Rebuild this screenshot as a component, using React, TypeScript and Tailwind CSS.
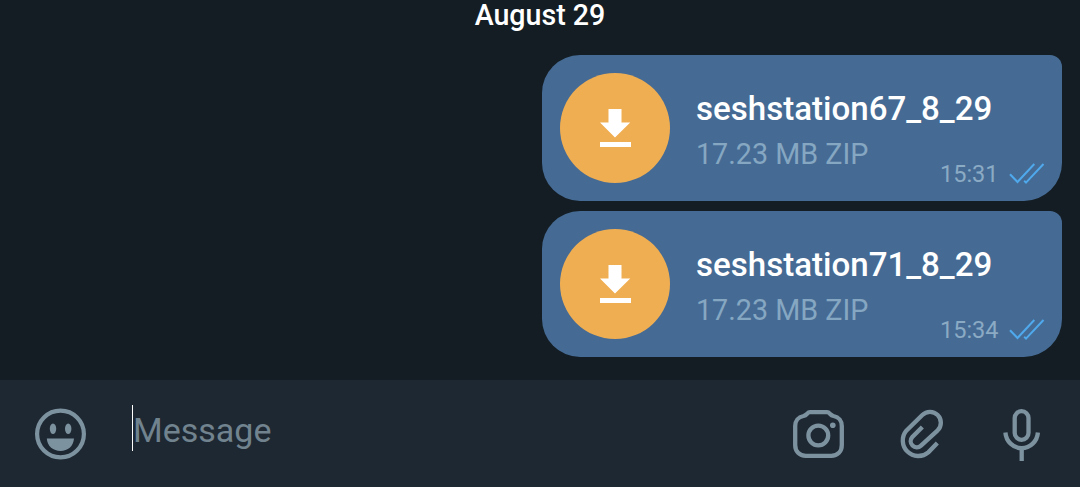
type FileMessage = {
  name: string;
  info: string;
  time: string;
};

const messages: FileMessage[] = [
  { name: "seshstation67_8_29", info: "17.23 MB ZIP", time: "15:31" },
  { name: "seshstation71_8_29", info: "17.23 MB ZIP", time: "15:34" },
];

const DownloadIcon = () => (
  <svg width="32" height="40" viewBox="0 0 32 40" fill="#fff">
    <path d="M9.5 1H22.5V14.5H31.2L16 29.5L1 14.5H9.5Z" />
    <path d="M1 34H32V39H1Z" />
  </svg>
);

const ReadIcon = () => (
  <svg
    width="36"
    height="24"
    viewBox="0 0 36 24"
    fill="none"
    stroke="#4fa9ec"
    strokeWidth="2"
  >
    <path d="M1 11.3L8.5 19L25.3 1" />
    <path d="M15.2 17.8L17 19.6L34.5 1" />
  </svg>
);

const EmojiIcon = () => (
  <svg width="52" height="52" viewBox="0 0 52 52" fill="#7d929f">
    <circle
      cx="26.5"
      cy="26"
      r="23.4"
      fill="none"
      stroke="#7d929f"
      strokeWidth="4.2"
    />
    <ellipse cx="19" cy="20.7" rx="3.2" ry="5.2" />
    <ellipse cx="34.2" cy="20.7" rx="3.2" ry="5.2" />
    <path d="M12.8 30.6H40C39.4 38.5 33.8 43 26.5 43S13.4 38.5 12.8 30.6Z" />
  </svg>
);

const CameraIcon = () => (
  <svg
    width="52"
    height="50"
    viewBox="0.5 0 52 50"
    fill="none"
    stroke="#7d929f"
    strokeWidth="4.3"
  >
    <path
      strokeLinejoin="round"
      d="M17.5 3.2H34.5C36 3.2 36.6 3.9 37.6 5C38.8 6.3 39.7 6.7 41 7C46.4 7.9 49.3 12 49.3 17V36C49.3 42.5 45.2 46.8 38.7 46.8H13.3C6.8 46.8 2.7 42.5 2.7 36V17C2.7 12 5.6 7.9 11 7C12.3 6.7 13.2 6.3 14.4 5C15.4 3.9 16 3.2 17.5 3.2Z"
    />
    <circle cx="25.8" cy="26.5" r="9.9" />
    <circle cx="40.3" cy="16.3" r="2.8" fill="#7d929f" stroke="none" />
  </svg>
);

const AttachIcon = () => (
  <svg
    width="46"
    height="52"
    viewBox="387 114 138 156"
    fill="none"
    stroke="#7d929f"
    strokeWidth="13"
  >
    <path d="M457 171L427 201A18.4 18.4 0 0 0 453 227L503 181A32.5 32.5 0 0 0 457 135L409 182A46.5 46.5 0 0 0 475 247L502 219" />
  </svg>
);

const MicIcon = () => (
  <svg
    width="40"
    height="54"
    viewBox="0 0 40 54"
    fill="none"
    stroke="#7d929f"
    strokeWidth="4.3"
  >
    <rect x="12.7" y="3.2" width="13.8" height="28.6" rx="6.9" />
    <path d="M3.4 24.5A16.3 17 0 0 0 35.9 24.5" />
    <path d="M19.7 41V53" />
  </svg>
);

const MessageBubble = ({ name, info, time }: FileMessage) => (
  <div className="flex h-[146px] w-[520px] rounded-[38px] rounded-tr-[12px] bg-[#456b94] pt-[18px] pr-[17px] pl-[18px]">
    <div className="flex size-[110px] shrink-0 items-center justify-center rounded-full bg-[#f0ae53]">
      <DownloadIcon />
    </div>
    <div className="ml-[26px] flex flex-1 flex-col">
      <p className="mt-[15px] text-[33.1px] leading-[41px] font-medium text-white">
        {name}
      </p>
      <p className="mt-[7px] text-[28.7px] leading-[36px] text-[#86a7c2]">
        {info}
      </p>
      <div className="-mt-[12px] flex h-[28px] justify-end">
        <span className="w-[69px] text-[23.5px] leading-[28px] text-[#8baac4]">
          {time}
        </span>
        <div className="mt-[3px]">
          <ReadIcon />
        </div>
      </div>
    </div>
  </div>
);

const App = () => {
  return (
    <div className="flex h-[487px] w-[1080px] flex-col overflow-hidden bg-[#141d24] font-['Roboto',sans-serif]">
      <div className="flex h-[55px] justify-center">
        <span className="text-[28.6px] leading-[30px] font-medium text-white">
          August 29
        </span>
      </div>

      <main className="flex flex-1 flex-col items-end gap-[10px] pr-[18px]">
        {messages.map((message) => (
          <MessageBubble key={message.name} {...message} />
        ))}
      </main>

      <footer className="flex h-[107px] items-start bg-[#1e2833] pt-[25px] pl-[34px]">
        <div className="mt-[3px]">
          <EmojiIcon />
        </div>
        <div className="ml-[46px] flex h-[46px] flex-1 border-l border-white">
          <span className="text-[34px] leading-[50px] text-[#71838e]">
            Message
          </span>
        </div>
        <div className="mt-[3px] mr-[38px] flex">
          <div className="mt-px">
            <CameraIcon />
          </div>
          <div className="ml-[54px]">
            <AttachIcon />
          </div>
          <div className="ml-[57px]">
            <MicIcon />
          </div>
        </div>
      </footer>
    </div>
  );
};

export default App;
